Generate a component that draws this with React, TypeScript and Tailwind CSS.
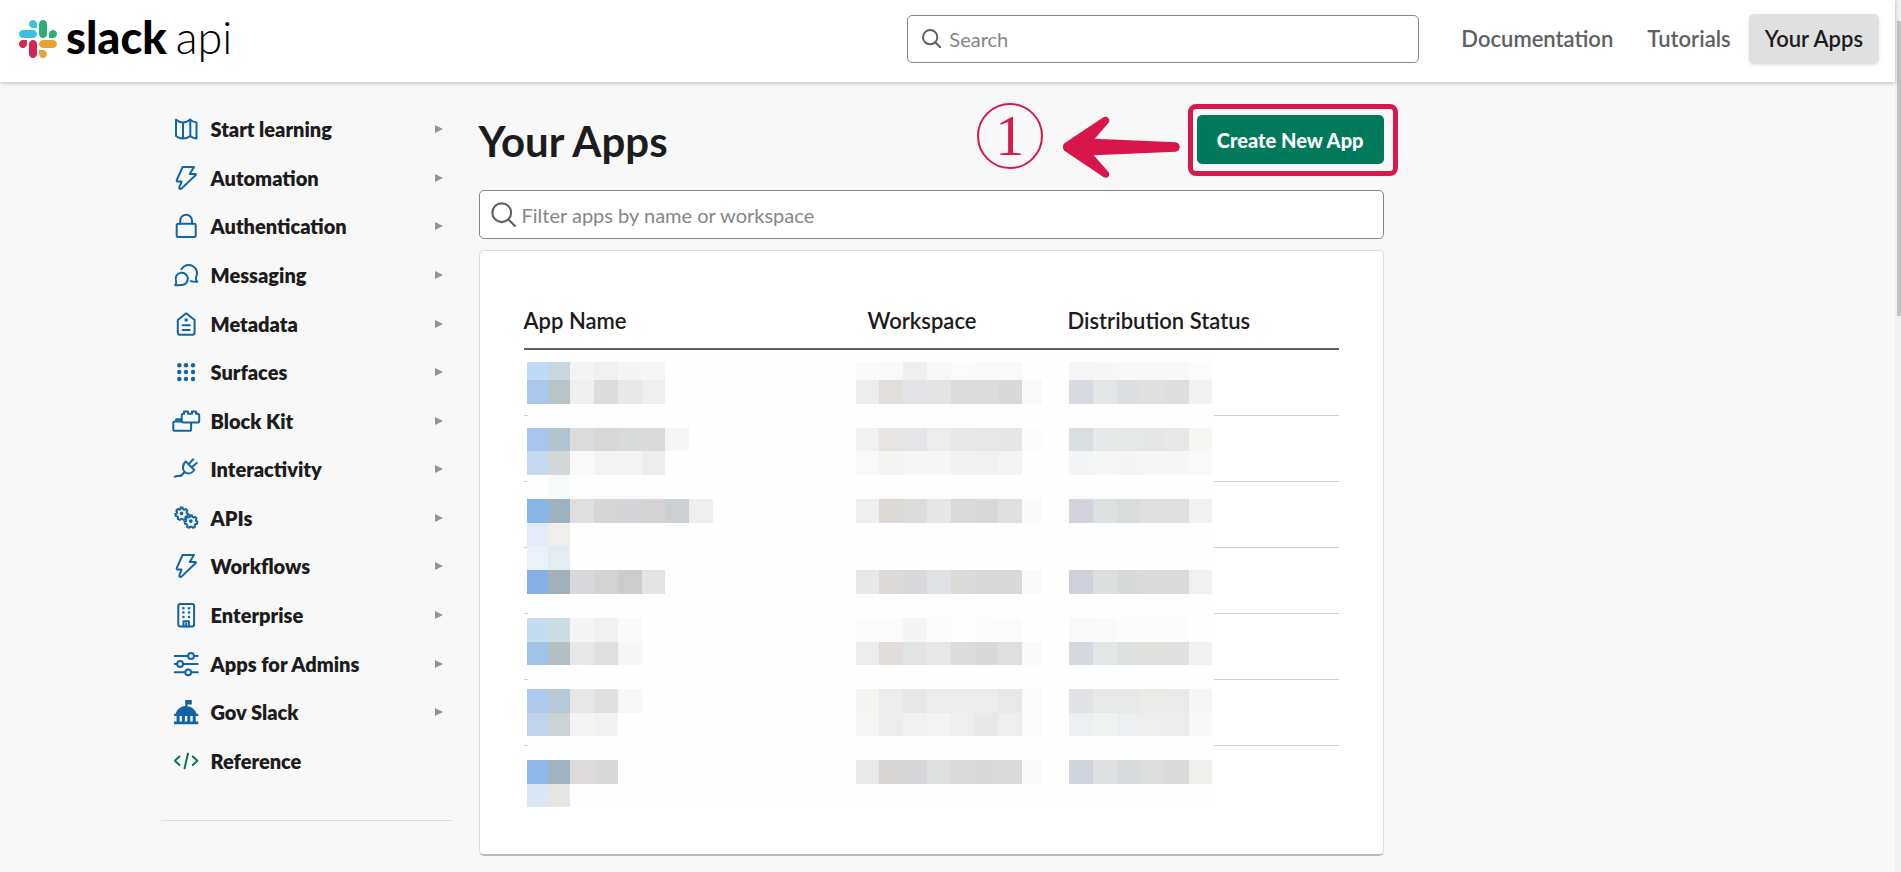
import type { ReactNode } from "react";

function Icon({ children, className = "text-[#1264a3]" }: { children: ReactNode; className?: string }) {
  return (
    <svg
      viewBox="0 0 24 24"
      fill="none"
      stroke="currentColor"
      strokeWidth="2"
      strokeLinecap="round"
      strokeLinejoin="round"
      aria-hidden="true"
      className={`size-6 shrink-0 overflow-visible ${className}`}
    >
      {children}
    </svg>
  );
}

const bolt = (
  <Icon>
    <path d="M8.6 1H20l-4.3 7h5.6a.6.6 0 0 1 .4 1L7.5 22.6c-.9.9-2.6.3-2.2-1L7.6 15.6H3.9c-1 0-1.5-.8-1.1-1.7z" />
  </Icon>
);

const gear =
  "M-1.1-5.6h2.2l.4 1.6 1.3.7 1.6-.8 1.5 1.7-.8 1.4.4 1.4 1.3.5-.4 2.1-1.6.3-.9 1.2.3 1.6-2 1-1.2-1.1h-1.6l-1.2 1.1-2-1 .3-1.6-.9-1.2-1.6-.3-.4-2.1 1.5-.5.4-1.4-.8-1.4 1.5-1.7 1.6.8 1.3-.7z";

const navItems: { label: string; icon: ReactNode; leaf?: boolean }[] = [
  {
    label: "Start learning",
    icon: (
      <Icon>
        <path d="M2 2.8c2 1.8 4.400 2.600 7 2.600 2.700 0 5.200-1 7.300-2.800 1.800 1.800 3.800 2.600 6.200 2.800v16.200c-2.400-.2-4.400-1-6.200-2.600-2.100 1.700-4.600 2.600-7.300 2.600-2.600 0-5-.9-7-2.600zM9 5.400v16.200M16.300 2.600V19" />
      </Icon>
    ),
  },
  { label: "Automation", icon: bolt },
  {
    label: "Authentication",
    icon: (
      <Icon>
        <rect x="2.700" y="9.800" width="19" height="13.200" rx="1.500" />
        <path d="M6.200 9.800V6.700a5.900 5.900 0 0 1 11.800 0v3.100" />
      </Icon>
    ),
  },
  {
    label: "Messaging",
    icon: (
      <Icon>
        <path d="M1.200 22.200c1.200-1.400 1.300-2.800.9-4.100a6.100 6.100 0 1 1 5.400 3.800c-2.200.2-4.200.4-6.300.3z" />
        <path d="M7.400 6.200a8.100 8.100 0 0 1 14.600 8.200c-.3 1.900.2 3.200 1.300 4.300-2.200.2-4.200 0-6.500-.6" />
      </Icon>
    ),
  },
  {
    label: "Metadata",
    icon: (
      <Icon>
        <path d="M12.200 1.200 20.600 8v12.800a2 2 0 0 1-2 2H5.800a2 2 0 0 1-2-2V8z" />
        <circle cx="12.200" cy="8" r="1.800" fill="currentColor" stroke="none" />
        <path d="M8.600 13.300h7.200M8.600 18h7.200" />
      </Icon>
    ),
  },
  {
    label: "Surfaces",
    icon: (
      <Icon>
        <g fill="currentColor" stroke="none">
          {[5.300, 12, 19].map((cx) => [5.300, 12, 19].map((cy) => <circle key={`${cx}-${cy}`} cx={cx} cy={cy} r="2.200" />))}
        </g>
      </Icon>
    ),
  },
  {
    label: "Block Kit",
    icon: (
      <Icon>
        <path d="M7.700 12.600V6.300q0-1.600 1.600-1.600h.7V2.400h4v2.300h4V2.400h4v2.300h1.600q1.600 0 1.600 1.600v5.600q0 1.600-1.600 1.600h-14q-1.500 0-1.900-.9" />
        <path d="M6.200 12.600V10.200h-4v2.400H.9q-1.600 0-1.600 1.600v6q0 1.600 1.600 1.600h14.600q1.600 0 1.600-1.600v-6.200M2.200 12.600h6" />
      </Icon>
    ),
  },
  {
    label: "Interactivity",
    icon: (
      <Icon>
        <path d="M11.600 4.400 20.300 13c-3 4-7 4.300-9.500 2-2.600-2.600-2.600-7 .8-10.600zM14.900 6.900l4.300-4.600M18 10l4.800-4M9.800 15.900C6 21.600 5 17.600.8 19.600" />
      </Icon>
    ),
  },
  {
    label: "APIs",
    icon: (
      <Icon>
        <path transform="translate(7.500 7) scale(.98)" d={gear} />
        <path transform="translate(16.800 14.800) scale(.98)" d={gear} />
        <circle cx="7.500" cy="7.300" r=".9" fill="currentColor" />
        <circle cx="16.800" cy="15.100" r=".9" fill="currentColor" />
      </Icon>
    ),
  },
  { label: "Workflows", icon: bolt },
  {
    label: "Enterprise",
    icon: (
      <Icon>
        <rect x="4.300" y=".9" width="15.800" height="22.600" rx="2" />
        <path d="M9.500 23.400v-5.200h5.400v5.200M12.200 20.500v2.900" />
        <path d="M9.400 5.300h.01M15 5.300h.01M9.400 9.600h.01M15 9.600h.01M9.400 13.900h.01M15 13.900h.01" strokeWidth="2.500" />
      </Icon>
    ),
  },
  {
    label: "Apps for Admins",
    icon: (
      <Icon>
        <path d="M.7 4h13M20 4h3.700M.7 12h2M9.300 12h14.400M.7 20.300h10.200M17.200 20.300h6.500" />
        <circle cx="17" cy="4" r="2.900" />
        <circle cx="6.100" cy="12" r="2.900" />
        <circle cx="14.200" cy="20.300" r="2.900" />
      </Icon>
    ),
  },
  {
    label: "Gov Slack",
    icon: (
      <Icon>
        <g fill="currentColor" stroke="none">
          <path d="M11.200 0h6.600v4.600h-4.500v1.600c4.600.4 8.200 3.800 9.200 7.600h1.700V16H0v-2.200h1.700C2.700 9.800 6.400 6.500 11.200 6.100z" />
          <path d="M2.600 15.500h3v6.600h-3zM7.900 15.500h3v6.600h-3zM13.300 15.500h3v6.600h-3zM18.700 15.500h3v6.600h-3zM0 21.600h24.300v2.600H0z" />
        </g>
      </Icon>
    ),
  },
  {
    label: "Reference",
    leaf: true,
    icon: (
      <Icon className="text-[#007a5a]">
        <path d="M5.500 7.500.9 11.800l4.600 4.300M18.800 7.500l4.600 4.300-4.600 4.300M14 4.600l-3.500 14.600" />
      </Icon>
    ),
  },
];

/* Redacted cells: one block per tile, coordinates relative to the table body. */
const bandTops = [12, 30, 54, 78, 101, 125, 149, 173, 196, 220, 244, 268, 292, 315, 339, 363, 386, 410, 434, 457];
const nameEdges = [3, 24, 46, 70, 94, 118, 141, 165, 189];
const workspaceEdges = [332, 355, 379, 403, 427, 451, 474, 498, 518];
const statusEdges = [545, 569, 593, 616, 640, 665, 688];

const mosaic: { edges: number[]; bands: Record<number, string[]> }[] = [
  {
    edges: nameEdges,
    bands: {
      0: ["#bfdaf4", "#c9d6df", "#f4f4f4", "#f0f0f0", "#f5f5f5", "#f6f6f6"],
      1: ["#a9c8ec", "#b9c4c6", "#efeff0", "#dcdcdc", "#e8e8e8", "#efefef"],
      3: ["#a8c4ef", "#b3c4d0", "#dddcdc", "#d8d8d8", "#d9dada", "#dadada", "#f6f6f6"],
      4: ["#c6daf1", "#d5d8d9", "#fafafa", "#f4f4f4", "#f4f4f4", "#ededed"],
      5: ["#fefefe", "#f6fafa"],
      6: ["#86b5e6", "#9cb2c1", "#e0dfe0", "#d6d6d7", "#d3d5d8", "#d5d3d5", "#cdd0d2", "#ecefee"],
      7: ["#e4ebf6", "#efeeeb"],
      8: ["#e9f2fb", "#e3ecf2"],
      9: ["#86afe6", "#a1b0ba", "#d9d9db", "#d3d3d3", "#cccccc", "#e5e4e4"],
      11: ["#c5dbf2", "#cddbe3", "#f5f5f5", "#f1f1f1", "#fafafa"],
      12: ["#a0c3e8", "#b4bfc3", "#e7e7e7", "#e0e0e0", "#f7f7f7"],
      14: ["#abcaee", "#b5c9d6", "#e7e7e7", "#e0e0e0", "#f8f8f8"],
      15: ["#c0d2ec", "#ccd3d4", "#f4f4f4", "#f2f2f2"],
      17: ["#8fb8ea", "#9fb3c2", "#dcdada", "#d9d9dc"],
      18: ["#dbe6f5", "#e5e5e3"],
    },
  },
  {
    edges: workspaceEdges,
    bands: {
      0: ["#fafafa", "#f9f9f9", "#efefef", "#f8f8f8", "#fbfbfb", "#f9f9f9", "#f9f9f9"],
      1: ["#ededed", "#e1dfdc", "#e3e3e6", "#e4e4e4", "#dcdcdb", "#dcdcdc", "#d9d9d9", "#f9f9f9"],
      3: ["#f1f1f1", "#e8e6e5", "#e4e5e7", "#ececec", "#e8e8e6", "#e7e7e7", "#e6e6e6", "#fcfcfc"],
      4: ["#f9f9f9", "#f5f5f4", "#f6f6f6", "#f7f7f7", "#f3f3f3", "#f1f1f1", "#f4f4f4"],
      6: ["#efefee", "#dddad5", "#dcdcdd", "#e5e6e6", "#dadada", "#d8d8d8", "#e0e0e0", "#fafafa"],
      9: ["#e8e8e8", "#dcdad8", "#d9d8da", "#dfe2e4", "#dadad8", "#d9d9d9", "#d9d9d9", "#fafafa"],
      11: ["#fbfbfb", "#fbfbfb", "#f5f5f5", "#fcfcfc", "#fefefe", "#fcfcfc", "#fbfbfb"],
      12: ["#ededec", "#dfdcda", "#e2e3e3", "#e7e7e7", "#dddcdb", "#dad8d9", "#dfdfdf", "#fafafa"],
      14: ["#f5f5f2", "#edeceb", "#e8e7e8", "#ededed", "#ececec", "#ececec", "#e9e9e9", "#fbfbfb"],
      15: ["#f6f6f6", "#eeeded", "#f1f1f1", "#f4f4f4", "#eeeeee", "#e8e8e8", "#eeeeee", "#fbfbfb"],
      17: ["#e9e9e9", "#d9d7d5", "#d7d6d8", "#dde0df", "#dadada", "#d9d9d9", "#dadada", "#fafafa"],
    },
  },
  {
    edges: statusEdges,
    bands: {
      0: ["#f6f6f6", "#f7f7f7", "#f8f8f8", "#f8f8f8", "#f8f8f8", "#fbfbfb"],
      1: ["#d7dbe1", "#e3e5e7", "#dcdfe2", "#e0e0df", "#dedede", "#f1f1f1"],
      3: ["#d9dee1", "#e7e8e9", "#e6e8e8", "#e5e6e6", "#e8e8e8", "#f6f6f3"],
      4: ["#f4f5f6", "#f5f6f6", "#f5f5f5", "#f6f6f5", "#f6f6f6", "#f9f9f9"],
      6: ["#d2d3dc", "#dce0e1", "#d9dcdc", "#dfdfdf", "#dfdfdf", "#f2f2f2"],
      9: ["#cfd0d9", "#dcdfe0", "#d8dada", "#dadad9", "#dadada", "#f0f0ee"],
      11: ["#f9f9f9", "#fafafa", "#fcfcfc", "#fcfcfc", "#fcfcfc"],
      12: ["#d5d8e0", "#e3e6e6", "#dce0df", "#dfdfdc", "#e0e0df", "#f1f1f1"],
      14: ["#e1e2e7", "#e8eaea", "#e8e9e9", "#ebebe8", "#eaeaea", "#f6f6f4"],
      15: ["#edf0f1", "#f1f2f2", "#ecefef", "#eeeeee", "#ededed", "#f8f8f8"],
      17: ["#cfd3db", "#dddfe0", "#d8dbdb", "#dcdedb", "#dadada", "#efefec"],
    },
  },
];

function Mosaic() {
  return (
    <svg viewBox="0 0 690 461" aria-hidden="true" shapeRendering="crispEdges" className="absolute left-0 top-[55px] h-[461px] w-[690px]">
      <rect x="4" y="3" width="686" height="457" fill="#fefefe" />
      {mosaic.map((group, g) =>
        Object.entries(group.bands).map(([band, colors]) => {
          const b = Number(band);
          return colors.map((fill, i) => (
            <rect
              key={`${g}-${b}-${i}`}
              x={group.edges[i]}
              y={bandTops[b]}
              width={group.edges[i + 1] - group.edges[i]}
              height={bandTops[b + 1] - bandTops[b]}
              fill={fill}
            />
          ));
        }),
      )}
    </svg>
  );
}

function SearchIcon({ className }: { className: string }) {
  return (
    <svg viewBox="0 0 24 24" fill="none" stroke="currentColor" strokeLinecap="round" aria-hidden="true" className={`shrink-0 ${className}`}>
      <circle cx="10.300" cy="10.300" r="9" />
      <path d="m17 17 6 6" />
    </svg>
  );
}

function Logo() {
  return (
    <a href="#home" className="flex items-center gap-[9px] text-[45px] leading-[50px] text-black">
      <svg viewBox="0 0 122.800 122.800" aria-hidden="true" className="size-[38px]">
        <path fill="#d72452" d="M25.800 77.600c0 7.100-5.800 12.900-12.900 12.900S0 84.700 0 77.600s5.800-12.900 12.900-12.900h12.900zM32.300 77.600c0-7.100 5.800-12.900 12.900-12.900s12.900 5.800 12.900 12.900v32.300c0 7.100-5.800 12.900-12.900 12.900s-12.900-5.800-12.900-12.900z" />
        <path fill="#3fbfdf" d="M45.200 25.800c-7.100 0-12.900-5.800-12.900-12.900S38.100 0 45.200 0s12.900 5.800 12.900 12.900v12.900zM45.200 32.300c7.100 0 12.900 5.800 12.900 12.900s-5.800 12.900-12.900 12.900H12.900C5.800 58.100 0 52.300 0 45.200s5.800-12.900 12.900-12.900z" />
        <path fill="#2eae78" d="M97 45.200c0-7.100 5.800-12.900 12.900-12.900s12.900 5.800 12.900 12.900-5.800 12.900-12.900 12.900H97zM90.500 45.200c0 7.100-5.800 12.900-12.900 12.900s-12.900-5.800-12.900-12.900V12.900C64.700 5.800 70.500 0 77.600 0s12.900 5.800 12.900 12.900z" />
        <path fill="#e6a637" d="M77.600 97c7.100 0 12.900 5.800 12.900 12.900s-5.800 12.900-12.900 12.900-12.900-5.800-12.900-12.900V97zM77.600 90.500c-7.100 0-12.900-5.800-12.900-12.900s5.800-12.900 12.900-12.900h32.300c7.100 0 12.900 5.800 12.900 12.900s-5.800 12.900-12.900 12.900z" />
      </svg>
      <span className="pb-1 font-black">slack</span>
      <span className="pb-1 font-light">api</span>
    </a>
  );
}

function Header() {
  return (
    <header className="relative z-10 flex h-[82px] items-center bg-white pr-4 pb-[5px] pl-[19px] shadow-[0_1px_4px_rgba(0,0,0,0.25)]">
      <Logo />
      <div className="ml-auto flex h-12 w-[512px] items-center gap-2 rounded-[5px] border border-[#868686] bg-white px-3.5 focus-within:border-[#1264a3]">
        <SearchIcon className="size-[19px] stroke-[2.500] text-[#616061]" />
        <input type="search" aria-label="Search" placeholder="Search" className="min-w-0 flex-1 bg-transparent text-[20px] text-[#1d1c1d] outline-none placeholder:text-[#868686]" />
      </div>
      <nav aria-label="Primary" className="ml-[26px] flex items-center gap-0.5 text-[22px] font-semibold text-[#616061]">
        <a href="#documentation" className="rounded-[5px] px-4 py-2">Documentation</a>
        <a href="#tutorials" className="rounded-[5px] px-4 py-2">Tutorials</a>
        <a href="#apps" aria-current="page" className="flex h-[50px] items-center rounded-[5px] bg-[#e0e0e0] px-4 text-[#1d1c1d] shadow-[0_1px_3px_rgba(0,0,0,0.12)]">
          Your Apps
        </a>
      </nav>
    </header>
  );
}

function Sidebar() {
  return (
    <aside className="w-[293px] shrink-0 pt-[23px]">
      <nav aria-label="Documentation">
        <ul className="grid min-h-170 auto-rows-fr pr-[9px] pl-[15px] text-[20px] font-extrabold text-[#1d1c1d]">
          {navItems.map((item) => (
            <li key={item.label}>
              <a href="#docs" className="flex h-full items-center gap-[13px]">
                {item.icon}
                <span className="flex-1">{item.label}</span>
                {!item.leaf && (
                  <svg viewBox="0 0 8 8" aria-hidden="true" className="size-2 fill-[#959595]">
                    <path d="M0 0v8l8-4z" />
                  </svg>
                )}
              </a>
            </li>
          ))}
        </ul>
      </nav>
      <hr className="mt-[35px] ml-0.5 border-[#dddddd]" />
      <p className="mt-[45px] pl-[15px] text-[20px] font-bold text-[#616061]">Translated</p>
    </aside>
  );
}

function Callout() {
  return (
    <div className="pointer-events-none absolute -top-[11px] -right-[14px] -bottom-3 -left-[9px] rounded-lg border-[5px] border-[#d61a4c]">
      <div className="absolute right-full -top-[6px] mr-[13px] flex gap-5">
        <span className="flex size-[66px] items-center justify-center rounded-full border-2 border-[#d61a4c] font-['Liberation_Serif',serif] text-[58px] leading-none text-[#d61a4c]">
          1
        </span>
        <svg viewBox="368 80 350 184" aria-hidden="true" className="mt-[13px] h-[62px] w-[117px] fill-[#d9164b]">
          <path d="M372 161 L489 83 C502 76 512 91 503 101 L463 147 L706 158 C721 161 721 183 706 186 L460 197 L504 247 C511 258 501 269 489 262 L372 183 C366 176 366 168 372 161Z" />
        </svg>
      </div>
    </div>
  );
}

function AppsTable() {
  return (
    <section className="mt-[11px] rounded-[5px] border border-[#dddddd] border-b-2 border-b-[#bbbbbb] bg-white px-11 pt-11 pb-[43px]">
      <div className="relative">
        <table className="w-full table-fixed border-collapse text-left">
          <thead className="border-b-2 border-[#616061] text-[22px] text-[#1d1c1d]">
            <tr className="h-[54px]">
              <th className="w-[344px] p-0 pb-0.5 font-semibold">App Name</th>
              <th className="w-[200px] p-0 pb-0.5 font-semibold">Workspace</th>
              <th className="p-0 pb-0.5 font-semibold">Distribution Status</th>
            </tr>
          </thead>
          <tbody>
            {Array.from({ length: 7 }, (_, i) => (
              <tr key={i} className="h-[66px] border-b border-[#cfcfcf] last:border-b-0">
                <td />
                <td />
                <td />
              </tr>
            ))}
          </tbody>
        </table>
        <Mosaic />
      </div>
    </section>
  );
}

export default function App() {
  return (
    <div className="flex h-screen overflow-hidden bg-[#f8f8f8] font-['Lato',sans-serif]">
      <div className="min-w-0 flex-1">
        <Header />
        <div className="mx-auto flex max-w-[1578px] gap-[27px]">
          <Sidebar />
          <main className="max-w-[905px] min-w-0 flex-1 pt-[33px]">
            <div className="flex items-start justify-between">
              <h1 className="pt-0.5 text-[42px] leading-[49px] font-bold text-[#1d1c1d]">Your Apps</h1>
              <div className="relative">
                <button type="button" className="h-[49px] rounded-[5px] bg-[#007a5a] px-5 text-[20px] font-black text-white">
                  Create New App
                </button>
                <Callout />
              </div>
            </div>
            <div className="mt-6 flex h-[49px] items-center gap-1.5 rounded-[5px] border border-[#868686] bg-white px-[11px] focus-within:border-[#1264a3]">
              <SearchIcon className="size-[25px] stroke-2 text-[#616061]" />
              <input
                type="text"
                aria-label="Filter apps by name or workspace"
                placeholder="Filter apps by name or workspace"
                className="min-w-0 flex-1 bg-transparent text-[20px] text-[#1d1c1d] outline-none placeholder:text-[#868686]"
              />
            </div>
            <AppsTable />
          </main>
        </div>
      </div>
      <div aria-hidden="true" className="w-1.5 bg-[#f1f1f1] pt-[21px] pl-0.5">
        <div className="h-[295px] bg-[#c1c1c1]" />
      </div>
    </div>
  );
}
